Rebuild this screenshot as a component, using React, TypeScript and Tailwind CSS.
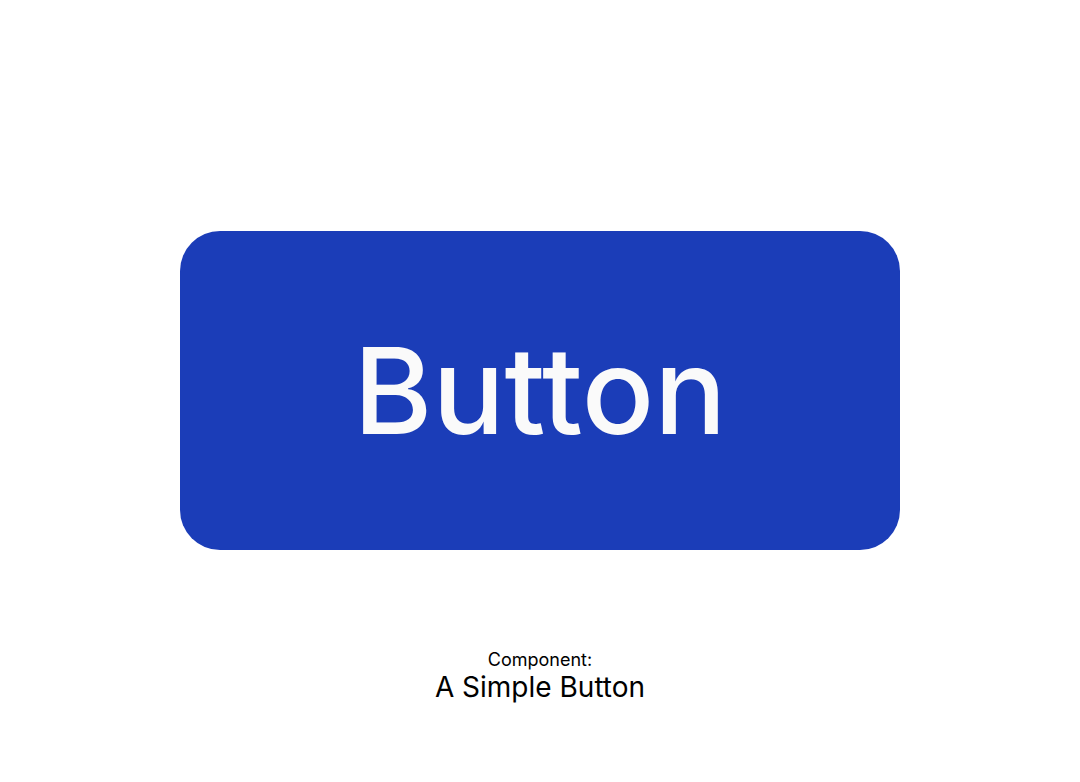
export default function App() {
  return (
    <main className="min-h-screen bg-white flex flex-col items-center pt-[231px] font-['Inter',sans-serif]">
      <button
        type="button"
        className="w-[720px] h-[319px] rounded-[40px] bg-[#1b3db8] text-[#fafafa] text-[120px] font-medium leading-none flex items-center justify-center"
      >
        Button
      </button>
      <div className="mt-[100px] flex flex-col items-center text-black">
        <span className="text-[18px] leading-[20px]">Component:</span>
        <span className="text-[28px] leading-[34px]">A Simple Button</span>
      </div>
    </main>
  );
}
